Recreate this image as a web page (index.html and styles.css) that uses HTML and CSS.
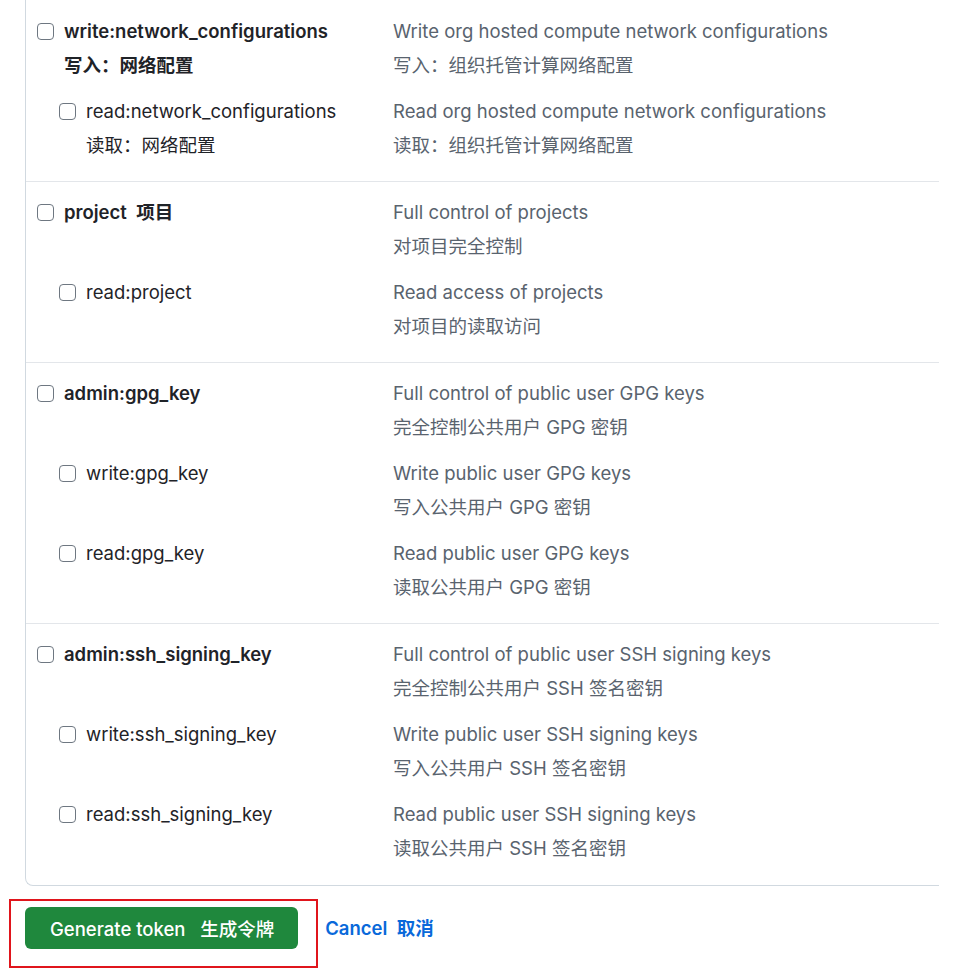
FILE: index.html
```html
<!DOCTYPE html>
<html lang="zh-CN">
<head>
    <meta charset="UTF-8">
    <meta name="viewport" content="width=device-width, initial-scale=1.0">
    <title>New personal access token</title>
    <link rel="stylesheet" href="styles.css">
</head>
<body>
    <div class="scopes">
        <div class="group">
            <div class="scope">
                <label class="name"><input type="checkbox"><span class="lines"><strong>write:network_configurations</strong><strong>写入：网络配置</strong></span></label>
                <div class="desc lines"><span>Write org hosted compute network configurations</span><span>写入：组织托管计算网络配置</span></div>
            </div>
            <div class="scope sub">
                <label class="name"><input type="checkbox"><span class="lines"><span>read:network_configurations</span><span>读取：网络配置</span></span></label>
                <div class="desc lines"><span>Read org hosted compute network configurations</span><span>读取：组织托管计算网络配置</span></div>
            </div>
        </div>

        <div class="group">
            <div class="scope">
                <label class="name"><input type="checkbox"><span class="lines"><strong>project&nbsp; 项目</strong></span></label>
                <div class="desc lines"><span>Full control of projects</span><span>对项目完全控制</span></div>
            </div>
            <div class="scope sub">
                <label class="name"><input type="checkbox"><span class="lines"><span>read:project</span></span></label>
                <div class="desc lines"><span>Read access of projects</span><span>对项目的读取访问</span></div>
            </div>
        </div>

        <div class="group">
            <div class="scope">
                <label class="name"><input type="checkbox"><span class="lines"><strong>admin:gpg_key</strong></span></label>
                <div class="desc lines"><span>Full control of public user GPG keys</span><span>完全控制公共用户 GPG 密钥</span></div>
            </div>
            <div class="scope sub">
                <label class="name"><input type="checkbox"><span class="lines"><span>write:gpg_key</span></span></label>
                <div class="desc lines"><span>Write public user GPG keys</span><span>写入公共用户 GPG 密钥</span></div>
            </div>
            <div class="scope sub">
                <label class="name"><input type="checkbox"><span class="lines"><span>read:gpg_key</span></span></label>
                <div class="desc lines"><span>Read public user GPG keys</span><span>读取公共用户 GPG 密钥</span></div>
            </div>
        </div>

        <div class="group">
            <div class="scope">
                <label class="name"><input type="checkbox"><span class="lines"><strong>admin:ssh_signing_key</strong></span></label>
                <div class="desc lines"><span>Full control of public user SSH signing keys</span><span>完全控制公共用户 SSH 签名密钥</span></div>
            </div>
            <div class="scope sub">
                <label class="name"><input type="checkbox"><span class="lines"><span>write:ssh_signing_key</span></span></label>
                <div class="desc lines"><span>Write public user SSH signing keys</span><span>写入公共用户 SSH 签名密钥</span></div>
            </div>
            <div class="scope sub">
                <label class="name"><input type="checkbox"><span class="lines"><span>read:ssh_signing_key</span></span></label>
                <div class="desc lines"><span>Read public user SSH signing keys</span><span>读取公共用户 SSH 签名密钥</span></div>
            </div>
        </div>
    </div>

    <div class="actions">
        <div class="highlight">
            <button type="button" class="btn-primary">Generate token &nbsp; 生成令牌</button>
        </div>
        <a href="#" class="cancel">Cancel&nbsp; 取消</a>
    </div>
</body>
</html>
```

FILE: styles.css
```css
body {
    margin: 0;
    background: #fff;
    color: #1f2328;
    font-family: Inter, "Noto Sans CJK SC", sans-serif;
    font-size: 18.5px;
}
.scopes {
    margin-left: 25px;
    width: 913px;
    border-left: 1px solid #d1d9e0;
    border-bottom: 1px solid #d1d9e0;
    border-bottom-left-radius: 8px;
}
.group {
    display: flex;
    flex-direction: column;
    gap: 22px;
    padding: 18px 0 24px;
    border-bottom: 1px solid #e3e6ea;
}
.group:first-child {
    padding-top: 19px;
}
.group:last-child {
    padding-bottom: 25px;
    border-bottom: none;
}
.scope {
    display: grid;
    grid-template-columns: 356px 1fr;
    min-height: 58px;
    padding-left: 11px;
}
.lines {
    display: flex;
    flex-direction: column;
    gap: 10px;
    line-height: 24px;
    white-space: nowrap;
}
.desc {
    color: #59636e;
}
.name {
    display: flex;
    align-items: flex-start;
    gap: 10px;
}
.name strong {
    font-weight: 600;
}
.sub .name {
    padding-left: 22px;
}
.name input {
    appearance: none;
    margin: 4px 0 0;
    width: 17px;
    height: 17px;
    border: 1px solid #6e7781;
    border-radius: 4px;
    background: #fff;
    flex: none;
}
.actions {
    display: flex;
    align-items: flex-start;
    margin: 13px 0 0 9px;
}
.highlight {
    padding: 6px 18px 17px 14px;
    border: 2px solid #e0151c;
}
.btn-primary {
    height: 42px;
    padding: 0 24px 0 25px;
    border: none;
    border-radius: 6px;
    background: #1f883d;
    color: #fff;
    font-family: inherit;
    font-size: 18.5px;
    font-weight: 500;
    cursor: pointer;
}
.cancel {
    margin: 8px 0 0 7px;
    line-height: 42px;
    color: #0969da;
    font-weight: 600;
    text-decoration: none;
}
```
